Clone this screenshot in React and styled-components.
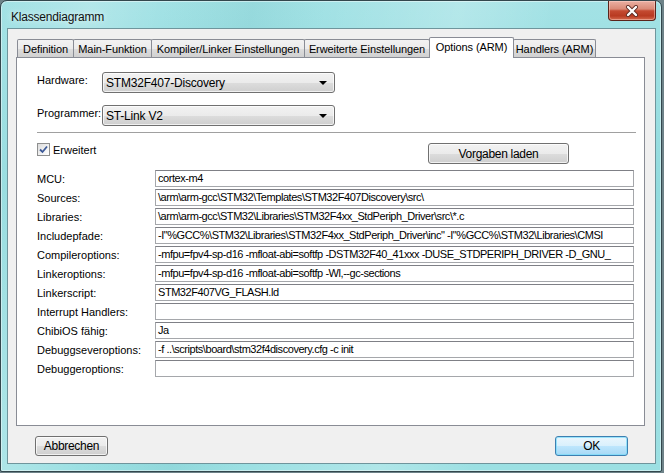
import React from 'react';
import styled, { createGlobalStyle } from 'styled-components';

const GlobalStyle = createGlobalStyle`
  html, body {
    margin: 0;
    padding: 0;
    background: #6e8389;
  }
  body {
    font-family: "Liberation Sans", Arial, sans-serif;
    font-size: 11px;
    color: #000;
  }
`;

const Window = styled.div`
  box-sizing: border-box;
  width: 662px;
  height: 472px;
  border: 1px solid #33474d;
  border-radius: 7px 7px 2px 2px;
  background:
    linear-gradient(100deg, rgba(255,255,255,0) 0%, rgba(255,255,255,0.18) 12%, rgba(255,255,255,0) 22%,
      rgba(70,160,165,0.12) 34%, rgba(255,255,255,0) 44%, rgba(255,255,255,0.2) 62%, rgba(255,255,255,0) 75%),
    linear-gradient(180deg, #a3e2e5 0%, #92dbde 40%, #9ce0e3 100%);
  box-shadow: inset 0 0 0 1px rgba(255,255,255,0.45);
  display: flex;
  flex-direction: column;
  overflow: hidden;
`;

const TitleBar = styled.div`
  height: 27px;
  display: flex;
  align-items: flex-start;
  flex-shrink: 0;
`;

const Title = styled.div`
  padding-left: 10px;
  padding-top: 9px;
  font-size: 12px;
  letter-spacing: -0.2px;
  color: #111;
  text-shadow: 0 0 6px rgba(255,255,255,0.9);
  flex: 1;
`;

const CloseButton = styled.div`
  width: 46px;
  height: 19px;
  margin-right: 5px;
  border: 1px solid #5a231a;
  border-top: none;
  border-radius: 0 0 4px 4px;
  background: linear-gradient(180deg, #eab0a3 0%, #d98a77 42%, #c44a31 52%, #b83a21 78%, #d56a4e 100%);
  box-shadow: inset 0 0 0 1px rgba(255,220,210,0.45);
  display: flex;
  align-items: center;
  justify-content: center;
`;

const Client = styled.div`
  flex: 1;
  margin: 0 5px 7px 6px;
  border: 1px solid #6f959c;
  background: #f0f0f0;
  display: flex;
  flex-direction: column;
  padding: 8px 10px 7px 8px;
`;

const TabStrip = styled.div`
  display: flex;
  align-items: flex-end;
  height: 21px;
  margin-bottom: -1px;
  padding-left: 1px;
  flex-shrink: 0;
`;

const Tab = styled.div`
  box-sizing: border-box;
  width: ${p => p.$w}px;
  height: ${p => (p.$active ? 21 : 19)}px;
  margin-left: -1px;
  border: 1px solid #898c95;
  border-bottom: none;
  border-radius: 2px 2px 0 0;
  background: ${p => (p.$active
    ? '#fff'
    : 'linear-gradient(180deg, #f2f2f2 0%, #ebebeb 50%, #dddddd 50%, #cfcfcf 100%)')};
  position: ${p => (p.$active ? 'relative' : 'static')};
  z-index: ${p => (p.$active ? 1 : 'auto')};
  display: flex;
  align-items: center;
  justify-content: center;
  padding-bottom: ${p => (p.$active ? 3 : 0)}px;
  white-space: nowrap;
  letter-spacing: -0.1px;
  &:first-child { margin-left: 0; }
`;

const Panel = styled.div`
  flex: 1;
  border: 1px solid #898c95;
  background: #fff;
  padding: 14px 9px 0 20px;
  display: flex;
  flex-direction: column;
`;

const ComboRow = styled.div`
  display: flex;
  align-items: center;
  height: 21px;
  margin-top: ${p => p.$mt || 0}px;
`;

const ComboLabel = styled.div`
  width: 65px;
  margin-top: -5px;
`;

const Combo = styled.div`
  box-sizing: border-box;
  width: 233px;
  height: 21px;
  border: 1px solid #707070;
  border-radius: 3px;
  background: linear-gradient(180deg, #f2f2f2 0%, #ebebeb 50%, #dddddd 50%, #cfcfcf 100%);
  box-shadow: inset 0 0 0 1px rgba(255,255,255,0.7);
  display: flex;
  align-items: center;
  padding: 0 7px 0 3px;
  font-size: 12px;
  letter-spacing: -0.2px;
`;

const ComboText = styled.span`
  flex: 1;
`;

const Arrow = styled.span`
  width: 0;
  height: 0;
  border-left: 4px solid transparent;
  border-right: 4px solid transparent;
  border-top: 4px solid #000;
`;

const Separator = styled.div`
  height: 0;
  border-top: 1px solid #a0a0a0;
  margin: 6px 0 0 0;
  width: 599px;
`;

const OptionRow = styled.div`
  display: grid;
  grid-template-columns: 391px 141px;
  align-items: start;
  margin-top: 10px;
  height: 21px;
`;

const CheckLabel = styled.label`
  display: flex;
  align-items: center;
  gap: 3px;
  height: 13px;
`;

const CheckBox = styled.span`
  box-sizing: border-box;
  width: 13px;
  height: 13px;
  border: 1px solid #8e8f8f;
  background: linear-gradient(135deg, #dcdcdc 0%, #f6f6f6 70%, #fff 100%);
  display: flex;
  align-items: center;
  justify-content: center;
`;

const Button = styled.button`
  box-sizing: border-box;
  width: ${p => p.$w || 73}px;
  height: ${p => p.$h || 20}px;
  border: 1px solid ${p => (p.$default ? '#3c7fb1' : '#707070')};
  border-radius: 3px;
  background: ${p => (p.$default
    ? 'linear-gradient(180deg, #eaf6fd 0%, #d9f0fc 50%, #bee6fd 50%, #a7d9f5 100%)'
    : 'linear-gradient(180deg, #f2f2f2 0%, #ebebeb 50%, #dddddd 50%, #cfcfcf 100%)')};
  box-shadow: inset 0 0 0 1px ${p => (p.$default ? 'rgba(120,220,250,0.7)' : 'rgba(255,255,255,0.7)')};
  font-family: "Liberation Sans", Arial, sans-serif;
  font-size: 12px;
  letter-spacing: -0.3px;
  color: #000;
  padding: 0;
`;

const Fields = styled.div`
  display: grid;
  grid-template-columns: 118px 479px;
  grid-auto-rows: 17px;
  row-gap: 2px;
  margin-top: 6px;
  align-items: center;
`;

const FieldLabel = styled.div`
  white-space: nowrap;
`;

const FieldBox = styled.div`
  box-sizing: border-box;
  height: 17px;
  border: 1px solid #a5a7ab;
  border-top-color: #7f8086;
  background: #fff;
  padding-left: 2px;
  line-height: 15px;
  letter-spacing: -0.45px;
  white-space: nowrap;
  overflow: hidden;
`;

const ButtonRow = styled.div`
  display: flex;
  justify-content: space-between;
  padding: 10px 17px 0 19px;
  flex-shrink: 0;
`;

const tabs = [
  { label: 'Definition', w: 57 },
  { label: 'Main-Funktion', w: 79 },
  { label: 'Kompiler/Linker Einstellungen', w: 154 },
  { label: 'Erweiterte Einstellungen', w: 126 },
  { label: 'Options (ARM)', w: 85, active: true },
  { label: 'Handlers (ARM)', w: 83 },
];

const fields = [
  ['MCU:', 'cortex-m4'],
  ['Sources:', '\\arm\\arm-gcc\\STM32\\Templates\\STM32F407Discovery\\src\\'],
  ['Libraries:', '\\arm\\arm-gcc\\STM32\\Libraries\\STM32F4xx_StdPeriph_Driver\\src\\*.c'],
  ['Includepfade:', '-I"%GCC%\\STM32\\Libraries\\STM32F4xx_StdPeriph_Driver\\inc" -I"%GCC%\\STM32\\Libraries\\CMSI'],
  ['Compileroptions:', '-mfpu=fpv4-sp-d16 -mfloat-abi=softfp -DSTM32F40_41xxx -DUSE_STDPERIPH_DRIVER -D_GNU_'],
  ['Linkeroptions:', '-mfpu=fpv4-sp-d16 -mfloat-abi=softfp -Wl,--gc-sections'],
  ['Linkerscript:', 'STM32F407VG_FLASH.ld'],
  ['Interrupt Handlers:', ''],
  ['ChibiOS fähig:', 'Ja'],
  ['Debuggseveroptions:', '-f ..\\scripts\\board\\stm32f4discovery.cfg -c init'],
  ['Debuggeroptions:', ''],
];

export default function App() {
  return (
    <>
      <GlobalStyle />
      <Window>
        <TitleBar>
          <Title>Klassendiagramm</Title>
          <CloseButton>
            <svg width="14" height="12" viewBox="0 0 14 12">
              <path d="M3 2 L11 10 M11 2 L3 10" stroke="#5a2a22" strokeWidth="4" strokeLinecap="round" />
              <path d="M3 2 L11 10 M11 2 L3 10" stroke="#fff" strokeWidth="2.4" strokeLinecap="round" />
            </svg>
          </CloseButton>
        </TitleBar>
        <Client>
          <TabStrip>
            {tabs.map(t => (
              <Tab key={t.label} $w={t.w} $active={t.active}>{t.label}</Tab>
            ))}
          </TabStrip>
          <Panel>
            <ComboRow>
              <ComboLabel>Hardware:</ComboLabel>
              <Combo><ComboText>STM32F407-Discovery</ComboText><Arrow /></Combo>
            </ComboRow>
            <ComboRow $mt={12}>
              <ComboLabel>Programmer:</ComboLabel>
              <Combo><ComboText>ST-Link V2</ComboText><Arrow /></Combo>
            </ComboRow>
            <Separator />
            <OptionRow>
              <CheckLabel>
                <CheckBox>
                  <svg width="9" height="9" viewBox="0 0 9 9">
                    <path d="M1 4.5 L3.5 7 L8 1.5" fill="none" stroke="#3d5a98" strokeWidth="1.8" />
                  </svg>
                </CheckBox>
                Erweitert
              </CheckLabel>
              <Button $w={141} $h={21}>Vorgaben laden</Button>
            </OptionRow>
            <Fields>
              {fields.map(([label, value]) => (
                <React.Fragment key={label}>
                  <FieldLabel>{label}</FieldLabel>
                  <FieldBox>{value}</FieldBox>
                </React.Fragment>
              ))}
            </Fields>
          </Panel>
          <ButtonRow>
            <Button>Abbrechen</Button>
            <Button $default>OK</Button>
          </ButtonRow>
        </Client>
      </Window>
    </>
  );
}
